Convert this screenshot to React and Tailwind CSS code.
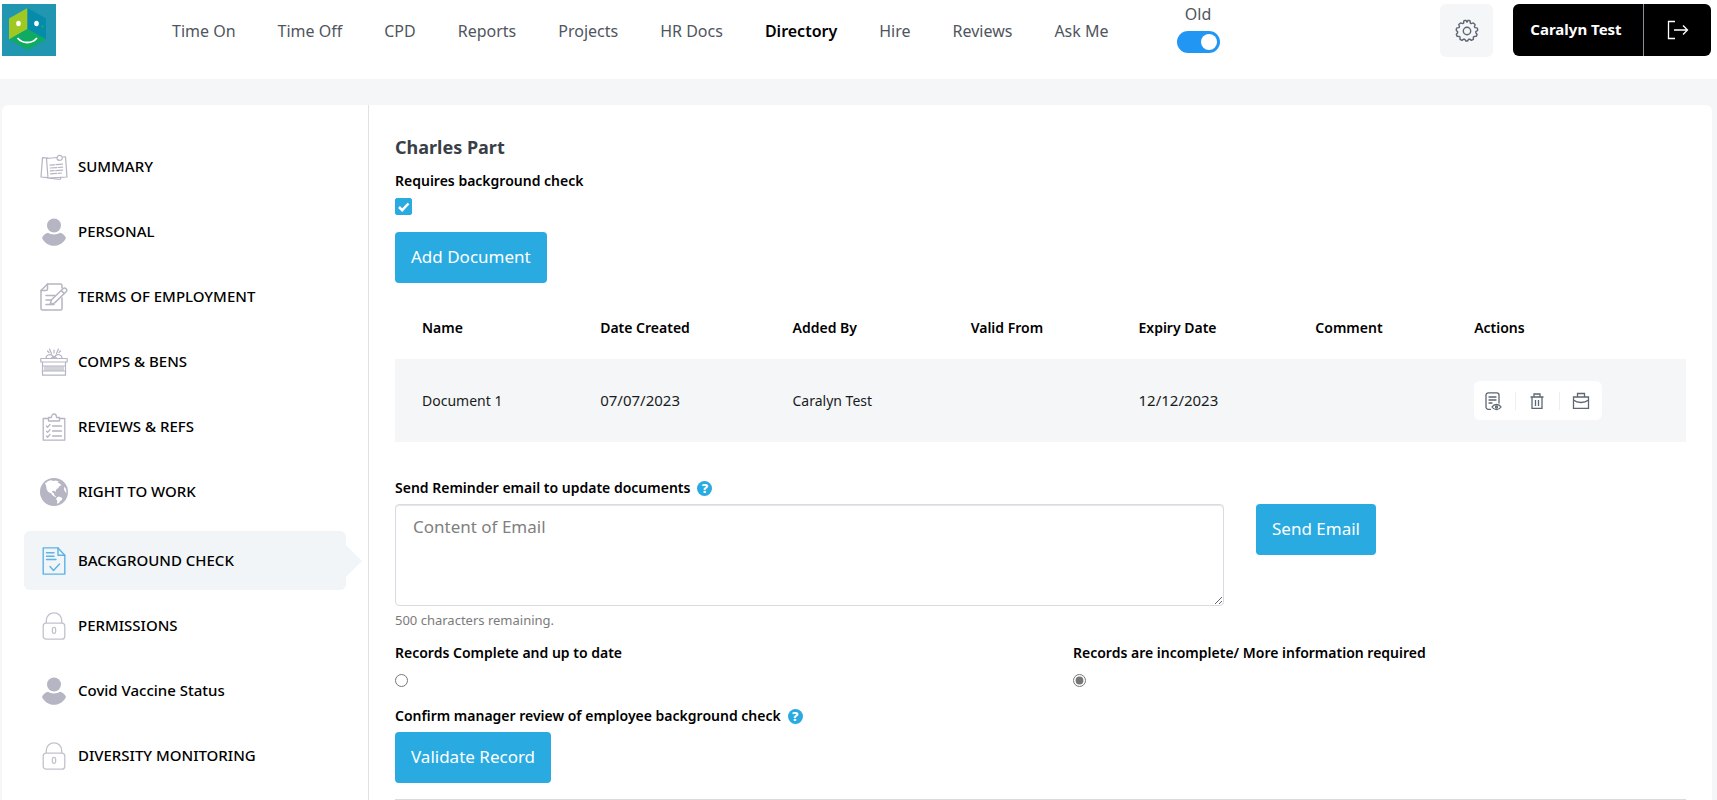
import { useState } from 'react';

const navLinks = ['Time On', 'Time Off', 'CPD', 'Reports', 'Projects', 'HR Docs', 'Directory', 'Hire', 'Reviews', 'Ask Me'];

const NotesIcon = () => (
  <svg viewBox="0 0 28 28" className="size-7" fill="none" stroke="#b5b5c3" strokeWidth="1.2" strokeLinejoin="round" strokeLinecap="round">
    <path d="M8 5 2.5 4.6 1 24l6.5.6" />
    <path d="M6.5 5.5 17 4.5M23 4l2.5-.2L27 24 8 25.2 6.5 5.5" />
    <path d="M10 25.2 20 26.5l1-2" />
    <path d="M18.5 7.5c-1.5-.5-2-2.5-1-4s3.500-1.500 4.400 0 .2 4-1.900 4l-1.500-.8" />
    <path d="m10 12.2 4.5-.4m1.500-.1 6.500-.5M10.200 15l6.500-.4m1.600-.1 4.300-.3M10.400 17.900l3.600-.2m1.700-.1 6.900-.5M10.500 20.800l6-.4m1.700-.1 3.400-.3" />
  </svg>
);

const PersonIcon = () => (
  <svg viewBox="0 0 28 28" className="size-7" fill="#b5b5c3">
    <circle cx="14" cy="7.500" r="7" />
    <path d="M8 14.800c-3 .9-5.100 2.700-6 5.200C4.300 24.800 8.700 27.800 14 27.800S23.700 24.800 26 20c-.9-2.500-3-4.300-6-5.200-1.600 1.100-3.700 1.700-6 1.700s-4.400-.6-6-1.700z" />
  </svg>
);

const ContractIcon = () => (
  <svg viewBox="0 0 28 28" className="size-7" fill="none" stroke="#b5b5c3" strokeWidth="1.5" strokeLinejoin="round" strokeLinecap="round">
    <path d="M22 5V2.500a1.500 1.500 0 0 0-1.500-1.500H7.500L1 7.500v18A1.500 1.500 0 0 0 2.500 27h18a1.500 1.500 0 0 0 1.500-1.500V15" />
    <path d="M7.500 1v5A1.500 1.500 0 0 1 6 7.500H1M6 12.500h9M6 17h5M6 21.500h3.500" />
    <path d="m10 21.500 1.500-4.800L23 5.700c1-1 2.300-.8 3.100 0s.9 2 0 3L14.700 19.900zM21.200 7.500l3.100 3.100M10 21.500h4" />
  </svg>
);

const GiftIcon = () => (
  <svg viewBox="0 0 28 28" className="size-7" fill="none" stroke="#b5b5c3" strokeWidth="1.2" strokeLinejoin="round" strokeLinecap="round">
    <path d="M.8 10.500h26.400v3.500H.8zM2.500 14h23v13.200h-23zM2.500 18h23M2.500 23h23" />
    <path d="M5 18.500v4m2-4v4m2-4v4m2-4v4m2-4v4m2-4v4m2-4v4m2-4v4m2-4v4m2-4v4" />
    <path d="M14 10.300c-1-3-3-4.300-5.500-3.500-2 .7-2.500 2-2.500 3.500M14 10.300c1-3 3-4.300 5.500-3.500 2 .7 2.500 2 2.500 3.500M11.500 10c.5-1 1.500-1.500 2.500-1.500s2 .5 2.500 1.500" />
    <path d="M14 5V2M11.500 5.500 9.500 1M16.500 5.500l2-4.500M9 4.500 7.500 3M19 4.500 20.500 3" />
  </svg>
);

const ClipboardIcon = () => (
  <svg viewBox="0 0 28 28" className="size-7" fill="none" stroke="#b5b5c3" strokeWidth="1.3" strokeLinejoin="round" strokeLinecap="round">
    <path d="M8.500 5.500H3.200v21.700h21.600V5.500h-5.300" />
    <path d="M8.500 8V4.500h3c0-2 1-3.500 2.500-3.500s2.500 1.500 2.500 3.500h3V8z" />
    <path d="m6.500 13 1.200 1.200L10 11.500m-3.500 6.700 1.200 1.200L10 16.700M6.500 23l1.200 1.200L10 21.500M12.500 13h9M12.500 18h9M12.500 23h9" />
  </svg>
);

const GlobeIcon = () => (
  <svg viewBox="0 0 28 28" className="size-7">
    <circle cx="14" cy="14" r="14" fill="#b5b5c3" />
    <path fill="#fff" d="M5 5.500c2-2 4-3 6-3.300l3 .8 1.500-.6 3.500 1-1.500 1.200 2 .8 2.200 1.800-2.200.7-1 1.900-2.300 1.700-.7 2.600-1.400-1.300-2 .2.300 1.600 1.500.6.500 2 1.600 1.200-.5.900-2.800-1.700-1.700-2.400-2.800-1.200L6.500 11l-.3-3.100z" />
    <path fill="#fff" d="m17 19.200 2-.6 3.300 1.300-.5 2-1.800 1.400-1 1.700-2 .7.300-3.300-1.300-1.200zM24.500 8.500l1.500 2.600.6 3.900-1.600-1.200-1-2.500z" />
  </svg>
);

const CheckedDocIcon = () => (
  <svg viewBox="0 0 28 28" className="size-7" fill="none" stroke="#5bb3e6" strokeWidth="1.4" strokeLinejoin="round" strokeLinecap="round">
    <path d="M3.200.9h14.800l6.800 7.300v18.900H3.200z" />
    <path d="M18 1v7.200h6.800M6.500 5.800h7.500M6.500 9.200h7.500M6.500 12.500h9.500M10 19.500l3.500 4 6-6.500" />
  </svg>
);

const LockIcon = () => (
  <svg viewBox="0 0 28 28" className="size-7" fill="none" stroke="#c2c2cd" strokeWidth="1.3">
    <rect x="3.200" y="11.200" width="21.600" height="16" rx="3" />
    <path d="M6.300 11V8.500a7.700 7.700 0 0 1 15.400 0V11" />
    <rect x="12.400" y="15.300" width="3.200" height="6" rx="1.600" />
  </svg>
);

const menu = [
  { label: 'SUMMARY', Icon: NotesIcon },
  { label: 'PERSONAL', Icon: PersonIcon },
  { label: 'TERMS OF EMPLOYMENT', Icon: ContractIcon },
  { label: 'COMPS & BENS', Icon: GiftIcon },
  { label: 'REVIEWS & REFS', Icon: ClipboardIcon },
  { label: 'RIGHT TO WORK', Icon: GlobeIcon },
  { label: 'BACKGROUND CHECK', Icon: CheckedDocIcon, active: true },
  { label: 'PERMISSIONS', Icon: LockIcon },
  { label: 'Covid Vaccine Status', Icon: PersonIcon },
  { label: 'DIVERSITY MONITORING', Icon: LockIcon },
];

const columns = [
  { label: 'Name', width: 'w-[13.8%]' },
  { label: 'Date Created', width: 'w-[14.9%]' },
  { label: 'Added By', width: 'w-[13.8%]' },
  { label: 'Valid From', width: 'w-[13%]' },
  { label: 'Expiry Date', width: 'w-[13.7%]' },
  { label: 'Comment', width: 'w-[12.3%]' },
  { label: 'Actions', width: 'w-[18.5%]' },
];

const documents = [
  { name: 'Document 1', created: '07/07/2023', addedBy: 'Caralyn Test', validFrom: '', expiry: '12/12/2023', comment: '' },
];

const Logo = () => (
  <svg viewBox="0 0 54 52" className="h-[52px] w-[54px]">
    <rect width="54" height="52" fill="#2196b0" />
    <path d="M7 14.500 25.500 4v21L7 35.500z" fill="#9fc922" />
    <path d="M25.500 4 44 14.500v21L25.500 25z" fill="#058caa" />
    <path d="M7 35.500 25.500 25 44 35.500 25.500 46z" fill="#0fab62" />
    <ellipse cx="16.500" cy="19.500" rx="2.300" ry="2.700" fill="#fff" />
    <ellipse cx="34.500" cy="19.500" rx="2.300" ry="2.700" fill="#fff" />
    <path d="M15.500 34c5 6 14.500 6 19.500 0" fill="none" stroke="#fff" strokeWidth="1.8" />
    <path d="M40.500 21v3M39 22.500h3" stroke="#0fab62" strokeWidth="1" />
  </svg>
);

const GearIcon = () => (
  <svg viewBox="0 0 24 24" className="size-6" fill="none" stroke="#5e6673" strokeWidth="1.4" strokeLinejoin="round">
    <path d="M9.900 1.500h1.300l.8 1.700.8-1.700h1.300l1 .4.200 2.200.9.500 2.100-.7 1.800 1.700-.7 2.100.5.900 2.200.3.500 1.200v1.400l-1.800 1.100v1.100l1.300 1.700-.9 2-2.200.1-.7.700.1 2.200-2 1-1.700-1.300-1 .1-1.200 1.800h-1.600l-1.200-1.800-1-.1-1.700 1.300-2-1 .1-2.200-.7-.7-2.200-.1-.9-2 1.300-1.700v-1.100L1.300 11.500v-1.400l.5-1.200 2.200-.3.500-.9-.7-2.100 1.800-1.700 2.100.7.900-.5.200-2.200z" />
    <circle cx="12" cy="12" r="3.700" />
  </svg>
);

const LogoutIcon = () => (
  <svg viewBox="0 0 22 20" className="h-5 w-[22px]" fill="none" stroke="#fff" strokeWidth="1.3">
    <path d="M8 1.500H1.500v17H8M7 10h13.500M16 5.500l4.500 4.500-4.500 4.500" />
  </svg>
);

const ViewIcon = () => (
  <svg viewBox="0 0 18 20" className="h-5 w-[18px]" fill="none" stroke="#5e6673" strokeWidth="1.3" strokeLinecap="round">
    <path d="M6.500 18.300H4.200A2.200 2.200 0 0 1 2 16.100V4a2.200 2.200 0 0 1 2.200-2.200h8.600A2.200 2.200 0 0 1 15 4v8M5 6h7M5 9h7M5 12h3" />
    <path d="M8 16c1-1.700 2.500-2.500 4.500-2.500s3.500.8 4.500 2.500c-1 1.700-2.500 2.500-4.500 2.500S9 17.700 8 16z" />
    <circle cx="12.500" cy="16" r="1" />
  </svg>
);

const BinIcon = () => (
  <svg viewBox="0 0 18 20" className="h-5 w-[18px]" fill="none" stroke="#5e6673" strokeWidth="1.3">
    <path d="M2.500 6h13M4 6v11.300h10V6M6 5.500V3h6v2.500M7.500 9v6M10.500 9v6" />
  </svg>
);

const CaseIcon = () => (
  <svg viewBox="0 0 18 20" className="h-5 w-[18px]" fill="none" stroke="#5e6673" strokeWidth="1.3">
    <path d="M1.500 6h15v11.300h-15zM5.500 5.500V2.500h7v3M1.500 9c4 3.300 11 3.300 15 0" />
  </svg>
);

const HelpIcon = () => (
  <span className="inline-flex size-[15px] items-center justify-center rounded-full bg-[#29abe2] text-[13px] leading-none font-extrabold text-white">?</span>
);

const Button = ({ children }) => (
  <button type="button" className="h-[51px] shrink-0 rounded-sm bg-[#29abe2] px-4 text-[17px] text-white hover:bg-[#1b9ad0]">
    {children}
  </button>
);

export default function App() {
  const [email, setEmail] = useState('');

  return (
    <div className="flex min-h-screen flex-col bg-[#f4f6f8] font-['Noto_Sans',sans-serif] text-sm text-black">
      <header className="flex h-[79px] items-start bg-white pt-1 pr-1.5 pl-0.5">
        <a href="#home" aria-label="Home"><Logo /></a>
        <nav className="ml-[116px] flex h-[54px] items-center gap-[42px] text-base text-[#50555e]">
          {navLinks.map((link) => (
            <a key={link} href={`#${link}`} className={link === 'Directory' ? 'font-semibold text-black' : 'hover:text-black'}>
              {link}
            </a>
          ))}
        </nav>
        <label className="ml-[68px] flex flex-col items-center text-base leading-5 text-[#50555e]">
          Old
          <input
            type="checkbox"
            defaultChecked
            className="mt-[7px] h-[22px] w-[43px] appearance-none rounded-full bg-gray-300 p-[3px] before:block before:size-4 before:rounded-full before:bg-white checked:bg-[#2196f3] checked:before:ml-[21px]"
          />
        </label>
        <button type="button" aria-label="Settings" className="ml-auto flex size-[53px] items-center justify-center rounded-md bg-[#f4f6f8]">
          <GearIcon />
        </button>
        <div className="ml-5 flex h-[52px] rounded-md bg-black text-white">
          <button type="button" className="w-[130px] pr-1 text-[15px] font-bold">Caralyn Test</button>
          <button type="button" aria-label="Log out" className="flex w-[68px] items-center justify-center border-l border-[#8a8f98]">
            <LogoutIcon />
          </button>
        </div>
      </header>

      <div className="mt-[26px] mr-[5px] ml-0.5 flex grow rounded-t-md bg-white">
        <aside className="w-[367px] shrink-0 border-r border-[#dfe1e5] pt-8 pr-[22px] pl-[22px]">
          <ul className="flex flex-col gap-1.5">
            {menu.map(({ label, Icon, active }) => (
              <li key={label} className={active ? 'relative mt-1' : ''}>
                <a
                  href={`#${label}`}
                  className={`flex h-[59px] items-center gap-2.5 rounded-md pl-4 text-[15px] font-medium ${active ? 'bg-[#f1f5f8]' : ''}`}
                >
                  <Icon />
                  {label}
                </a>
                {active && (
                  <svg viewBox="0 0 16 32" className="absolute top-[14px] left-full h-8 w-4" fill="#f1f5f8">
                    <path d="M0 0 16 16 0 32z" />
                  </svg>
                )}
              </li>
            ))}
          </ul>
        </aside>

        <main className="grow pt-7 pr-[26px] pl-[26px]">
          <h1 className="text-lg leading-7 font-bold text-[#3a3f47]">Charles Part</h1>
          <label htmlFor="requires" className="mt-2.5 block leading-5 font-semibold">Requires background check</label>
          <div className="mt-[7px] grid size-[17px]">
            <input id="requires" type="checkbox" defaultChecked className="peer col-start-1 row-start-1 appearance-none rounded-xs border border-[#29abe2] checked:bg-[#29abe2]" />
            <svg viewBox="0 0 17 17" className="pointer-events-none col-start-1 row-start-1 hidden peer-checked:block" fill="none" stroke="#fff" strokeWidth="2.5">
              <path d="m4 9 3.200 3.200L13.500 5.500" />
            </svg>
          </div>
          <div className="mt-[17px]">
            <Button>Add Document</Button>
          </div>

          <table className="mt-[14px] w-full table-fixed text-left">
            <thead>
              <tr className="h-[62px]">
                {columns.map((c) => (
                  <th key={c.label} className={`pl-[27px] font-semibold ${c.width}`}>{c.label}</th>
                ))}
              </tr>
            </thead>
            <tbody>
              {documents.map((d) => (
                <tr key={d.name} className="h-[83px] bg-[#f4f6f8] text-[#181c20]">
                  <td className="pl-[27px]">{d.name}</td>
                  <td className="pl-[27px] text-[15px]">{d.created}</td>
                  <td className="pl-[27px]">{d.addedBy}</td>
                  <td className="pl-[27px]">{d.validFrom}</td>
                  <td className="pl-[27px] text-[15px]">{d.expiry}</td>
                  <td className="pl-[27px]">{d.comment}</td>
                  <td className="pl-[27px]">
                    <div className="inline-flex h-[39px] w-32 items-center justify-between rounded-md bg-white pr-3 pl-2.5 align-middle">
                      <button type="button" aria-label="View"><ViewIcon /></button>
                      <span className="h-[18px] w-px bg-[#eceef1]" />
                      <button type="button" aria-label="Delete"><BinIcon /></button>
                      <span className="h-[18px] w-px bg-[#eceef1]" />
                      <button type="button" aria-label="Archive"><CaseIcon /></button>
                    </div>
                  </td>
                </tr>
              ))}
            </tbody>
          </table>

          <div className="mt-9 flex items-center gap-[7px]">
            <label htmlFor="email" className="leading-5 font-semibold">Send Reminder email to update documents</label>
            <HelpIcon />
          </div>
          <div className="mt-1.5 flex items-start gap-8">
            <textarea
              id="email"
              maxLength={500}
              value={email}
              onChange={(e) => setEmail(e.target.value)}
              placeholder="Content of Email"
              className="block h-[102px] w-[829px] max-w-full rounded-sm border border-[#d9dbe0] px-[17px] py-2.5 text-[17px] leading-6 shadow-[inset_0_1px_1px_#e3e5e9] placeholder:text-[#808080]"
            />
            <Button>Send Email</Button>
          </div>
          <p className="mt-1 text-[13px] leading-5 text-[#7b7b7b]">{500 - email.length} characters remaining.</p>

          <div className="mt-[13px] grid grid-cols-[678px_1fr]">
            <label className="flex flex-col items-start gap-[11px] leading-5 font-semibold">
              Records Complete and up to date
              <input type="radio" name="records" className="m-0 size-[13px] accent-[#767676]" />
            </label>
            <label className="flex flex-col items-start gap-[11px] leading-5 font-semibold">
              Records are incomplete/ More information required
              <input type="radio" name="records" defaultChecked className="m-0 size-[13px] accent-[#767676]" />
            </label>
          </div>

          <div className="mt-[19px] mb-1.5 flex items-center gap-[7px]">
            <p className="leading-5 font-semibold">Confirm manager review of employee background check</p>
            <HelpIcon />
          </div>
          <Button>Validate Record</Button>
          <hr className="mt-4 border-[#d9dbe0]" />
        </main>
      </div>
    </div>
  );
}
